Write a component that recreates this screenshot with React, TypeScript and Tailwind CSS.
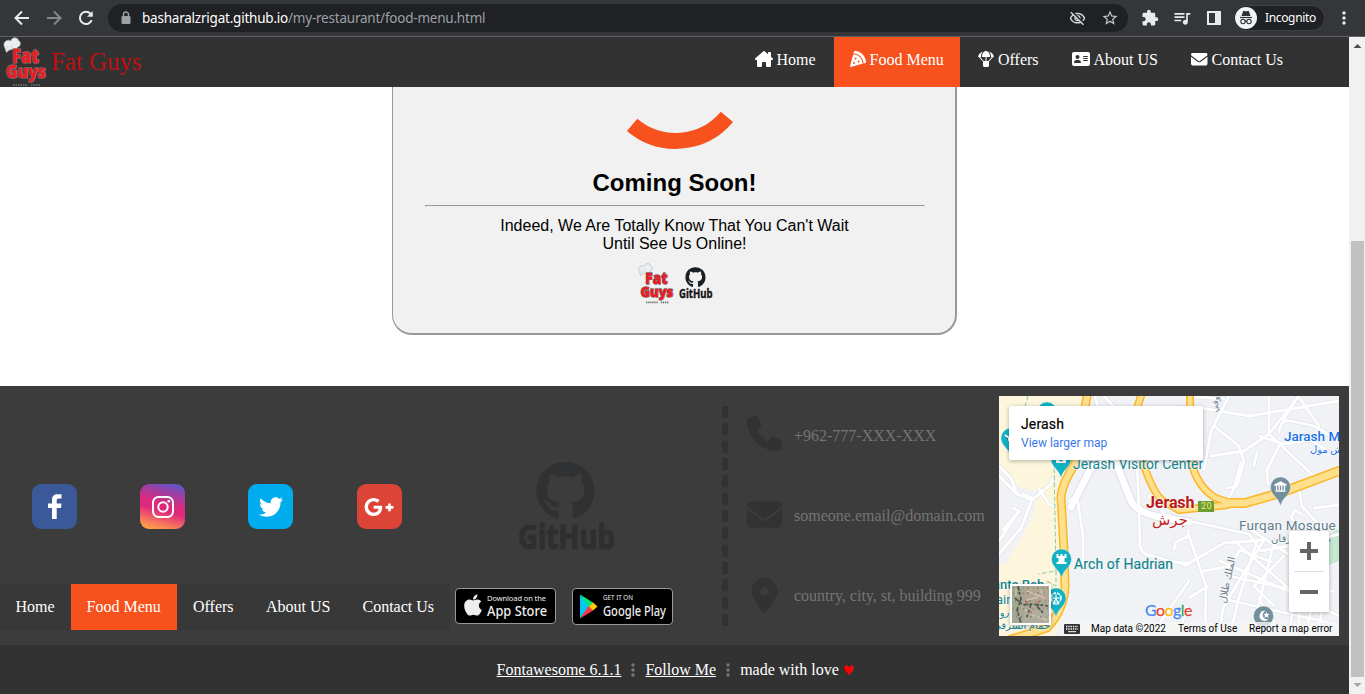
import React from "react";
import {
  FaHouseChimney, FaPizzaSlice, FaParachuteBox, FaAddressCard, FaEnvelope, FaPhone,
  FaLocationDot, FaGithub, FaTwitter, FaGooglePlusG, FaApple, FaEllipsisVertical,
} from "react-icons/fa6";
import {
  MdOutlineVisibilityOff, MdStarBorder, MdExtension, MdMoreVert, MdOutlineQueueMusic,
} from "react-icons/md";

function FatGuysLogo({ className }: { className: string }) {
  return (
    <svg viewBox="0 0 44 50" className={className}>
      <path d="M3.500 15.500 L1.500 10 C-1 5 5 1.500 8 4 C8.500 -.5 15 0 15.500 3.500 C19 5 17 10.500 14.500 10 L13.500 12.500 C9 11.500 6 12.500 3.500 15.500Z" fill="#e9eef0" stroke="#a4b0b2" strokeWidth=".7" />
      <path d="M5 12 L4.500 9 M9 10.500 L8.500 8" stroke="#b4bfc1" strokeWidth=".6" fill="none" />
      <g fontFamily="Open Sans, Lato, sans-serif" fontWeight="800" strokeLinejoin="round" paintOrder="stroke" fill="#ed1c24">
        <text x="9" y="26" fontSize="20" textLength="27" lengthAdjust="spacingAndGlyphs" stroke="#7d6a6c" strokeWidth="1.600">Fat</text>
        <text x="3" y="41" fontSize="17" textLength="40" lengthAdjust="spacingAndGlyphs" stroke="#7d6a6c" strokeWidth="1.600">Guys</text>
      </g>
      <path d="M10 48 H24 M28 48 H37" stroke="#666" strokeWidth="2" strokeDasharray="1.500 1" />
    </svg>
  );
}

function Toolbar() {
  return (
    <header className="flex h-[37px] shrink-0 items-center border-b border-[#5f6165] bg-[#35363a] text-[#e8eaed]">
      <div className="flex w-[108px] items-center gap-[12px] pl-[12px]">
        <svg viewBox="0 0 20 20" className="h-[20px] w-[20px]" fill="none" stroke="currentColor" strokeWidth="2"><path d="M17 10H4M10 3.500L3.500 10L10 16.500" /></svg>
        <svg viewBox="0 0 20 20" className="h-[20px] w-[20px] text-[#85878a]" fill="none" stroke="currentColor" strokeWidth="2"><path d="M3 10H16M10 3.500L16.500 10L10 16.500" /></svg>
        <svg viewBox="0 0 20 20" className="h-[20px] w-[20px]" fill="none" stroke="currentColor" strokeWidth="2"><path d="M15.700 12.200A6.100 6.100 0 1 1 14.500 5.800L16 7.500" /><path d="M16.700 3V8.700H11Z" fill="currentColor" stroke="none" /></svg>
      </div>
      <div className="flex h-[28px] w-[1020px] items-center rounded-full bg-[#202124] pl-[10px]">
        <svg viewBox="0 0 16 16" className="h-[16px] w-[16px] shrink-0 text-[#9aa0a6]">
          <rect x="3.500" y="6" width="9" height="8" rx="1" fill="currentColor" />
          <path d="M5.500 7V4.500a2.500 2.500 0 0 1 5 0V7" fill="none" stroke="currentColor" strokeWidth="1.400" />
        </svg>
        <div className="ml-[8px] flex-1 whitespace-nowrap pt-px font-['Noto_Sans','Open_Sans',sans-serif] text-[13.500px] tracking-[-0.220px] text-[#9aa0a6]">
          <span className="text-white">basharalzrigat.github.io</span>/my-restaurant/food-menu.html
        </div>
        <MdOutlineVisibilityOff size={17} className="mr-[15px] text-[#d4d6d9]" />
        <MdStarBorder size={18} className="mr-[9px] text-[#c4c6c9]" />
      </div>
      <MdExtension size={18} className="ml-[13px]" />
      <MdOutlineQueueMusic size={20} className="ml-[13px]" />
      <svg viewBox="0 0 14 14" className="ml-[15px] h-[14px] w-[14px]">
        <path fillRule="evenodd" fill="currentColor" d="M0 0H14V14H0Z M2 2V12H8V2Z" />
      </svg>
      <div className="ml-[12px] flex h-[26px] w-[92px] items-center gap-[8px] rounded-full border border-[#3f4043] bg-[#202124] pl-[1px]">
        <svg viewBox="0 0 22 22" className="h-[22px] w-[22px] shrink-0">
          <circle cx="11" cy="11" r="11" fill="#f1f3f4" />
          <path d="M6.500 9 L8 4.500 C8.300 3.900 9 4 11 4.500 C13 4 13.700 3.900 14 4.500 L15.500 9Z" fill="#303134" />
          <path d="M5 10.500H17" stroke="#303134" strokeWidth="1.200" />
          <g fill="none" stroke="#303134" strokeWidth="1.100"><circle cx="8" cy="14.500" r="2.200" /><circle cx="14" cy="14.500" r="2.200" /><path d="M10 14.200Q11 13.500 12 14.200" /></g>
        </svg>
        <span className="font-['Noto_Sans','Open_Sans',sans-serif] text-[12px] tracking-[-0.350px] text-white">Incognito</span>
      </div>
      <MdMoreVert size={20} className="ml-[9px]" />
    </header>
  );
}

const navItems = [
  { label: "Home", Icon: FaHouseChimney, box: "w-[95px] pl-[16px]", icon: "w-[21.500px]", size: 18 },
  { label: "Food Menu", Icon: FaPizzaSlice, box: "w-[126px] pl-[15.500px] bg-[#f7521e]", icon: "w-[20px]", size: 16 },
  { label: "Offers", Icon: FaParachuteBox, box: "w-[96px] pl-[18px]", icon: "w-[20px]", size: 16 },
  { label: "About US", Icon: FaAddressCard, box: "w-[119px] pl-[16px]", icon: "w-[21.500px]", size: 18 },
  { label: "Contact Us", Icon: FaEnvelope, box: "w-[120px] pl-[16px]", icon: "w-[20.500px]", size: 16.5 },
];

function NavBar() {
  return (
    <nav className="flex h-[50px] shrink-0 bg-[#323232] text-[16px] text-white">
      <FatGuysLogo className="ml-[3px] h-[50px] w-[44px]" />
      <div className="w-[692px] pl-[4px] pt-[8px] text-[25px] leading-[34px] tracking-[-0.060px] text-[#c00f13]">Fat Guys</div>
      {navItems.map(({ label, Icon, box, icon, size }) => (
        <a key={label} className={`flex items-center whitespace-nowrap pb-[4px] ${box}`}>
          <span className={`shrink-0 pb-[2px] ${icon}`}><Icon size={size} /></span>
          <span>{label}</span>
        </a>
      ))}
    </nav>
  );
}

function GitHubMark({ className, icon, text }: { className: string; icon: string; text: string }) {
  return (
    <svg viewBox="0 0 98 92" className={className}>
      <FaGithub x={17.5} y={0} size={60} className={icon} />
      <text x="0" y="88" fontSize="34" fontWeight="700" fontFamily="Noto Sans, Open Sans, sans-serif" textLength="97" lengthAdjust="spacingAndGlyphs" strokeWidth="1" strokeLinejoin="round" className={text}>GitHub</text>
    </svg>
  );
}

function ComingSoon() {
  return (
    <main className="flex h-[299px] shrink-0 justify-center bg-white">
      <section className="flex h-[248px] w-[565px] flex-col items-center rounded-b-[20px] border-b-2 border-l border-r-2 border-[#999] bg-[#f1f1f1] pl-px font-['Liberation_Sans',Arial,sans-serif] text-black">
        <svg viewBox="598 87 154 63" className="h-[63px] w-[154px] shrink-0">
          <circle cx="675.500" cy="74" r="67" fill="none" stroke="#f2f2f2" strokeWidth="16" />
          <path d="M632.100 124.900 A67 67 0 0 0 726.900 116.900" fill="none" stroke="#f7521e" strokeWidth="16" />
        </svg>
        <h1 className="mt-[19px] text-[24px] font-bold leading-[28px]">Coming Soon!</h1>
        <hr className="mt-[8px] w-[500px] border border-t-[#999] border-l-[#999] border-r-[#eee] border-b-[#eee]" />
        <p className="mt-[10px] text-center text-[16px] leading-[18px]">Indeed, We Are Totally Know That You Can't Wait<br />Until See Us Online!</p>
        <div className="mt-[10px] flex gap-[4px]">
          <FatGuysLogo className="h-[41px] w-[38px]" />
          <GitHubMark className="mt-[4px] h-[32px] w-[34px]" icon="text-[#191f23]" text="fill-[#111] stroke-[#111]" />
        </div>
      </section>
    </main>
  );
}

function Socials() {
  const tile = "flex h-[45px] w-[45px] items-center justify-center rounded-[9px] text-white";
  return (
    <div className="flex h-[198px] shrink-0">
      <div className="flex w-[518px] gap-[63px] pl-[32px] pt-[98px]">
        <div className={`${tile} bg-[#3b5998]`}>
          <svg viewBox="0 0 14 25" className="h-[25px] w-[14px]"><path d="M4 25V14H0V9.500H4V6C4 2 6 .2 9.500 .2H13.500V4.500H11C9 4.500 8.700 5.300 8.700 7V9.500H13.500L13 14H8.700V25Z" fill="#fff" /></svg>
        </div>
        <div className={`${tile} bg-[linear-gradient(15deg,#ffb13c_0%,#f77b5b_18%,#e1277f_43%,#dd2a7b_55%,#a03da0_76%,#515bd4_100%)]`}>
          <svg viewBox="0 0 22 22" className="h-[22px] w-[22px]" fill="none" stroke="#fff" strokeWidth="2"><rect x="1" y="1" width="20" height="20" rx="5.500" /><circle cx="11" cy="11" r="4.700" /><circle cx="16.800" cy="5.200" r="1.300" fill="#fff" stroke="none" /></svg>
        </div>
        <div className={`${tile} bg-[#00aced]`}><FaTwitter size={24} /></div>
        <div className={`${tile} ml-[1px] bg-[#dc4437] pr-[2px]`}><FaGooglePlusG size={30} /></div>
      </div>
      <GitHubMark className="mt-[75px] h-[92px] w-[98px]" icon="text-[#2f3133]" text="fill-[#2f2f2d] stroke-[#2f2f2d]" />
    </div>
  );
}

function FooterNav() {
  return (
    <div className="flex h-[46px]">
      <div className="flex w-[450px] whitespace-nowrap bg-[#383838] text-[16px] leading-[46px] text-white">
        <a className="w-[71px] pl-[15.500px]">Home</a>
        <a className="w-[106px] bg-[#f7521e] pl-[15.500px]">Food Menu</a>
        <a className="w-[73px] pl-[16px]">Offers</a>
        <a className="w-[97px] pl-[16px]">About US</a>
        <a className="pl-[15.500px]">Contact Us</a>
      </div>
      <svg viewBox="0 0 101 36" className="ml-[5px] mt-[4px] h-[36px] w-[101px] text-[#eee]" fill="currentColor" fontFamily="Noto Sans, Open Sans, sans-serif">
        <rect x=".5" y=".5" width="100" height="35" rx="3.500" fill="#000" stroke="#999" />
        <FaApple x={6} y={5} size={24} />
        <text x="32" y="12.500" fontSize="7.500" textLength="59" lengthAdjust="spacing">Download on the</text>
        <text x="32" y="28" fontSize="15" fontWeight="500" textLength="60" lengthAdjust="spacingAndGlyphs">App Store</text>
      </svg>
      <svg viewBox="0 0 101 37" className="ml-[16px] mt-[4px] h-[37px] w-[101px] text-[#eee]" fill="currentColor" fontFamily="Noto Sans, Open Sans, sans-serif">
        <rect x=".5" y=".5" width="100" height="36" rx="3.500" fill="#000" stroke="#999" />
        <g transform="translate(8 6.500)">
          <path d="M0 0V24L10 12Z" fill="#00c8f5" /><path d="M0 0L13 8L9 13Z" fill="#00e676" />
          <path d="M0 24L13 16L9 11Z" fill="#ff3548" /><path d="M13 8L17.500 12L13 16L9 12Z" fill="#ffce00" />
        </g>
        <text x="31" y="12" fontSize="7.500" textLength="30" lengthAdjust="spacingAndGlyphs">GET IT ON</text>
        <text x="31" y="27.500" fontSize="15" fontWeight="500" textLength="63" lengthAdjust="spacingAndGlyphs">Google Play</text>
      </svg>
    </div>
  );
}

function Contacts() {
  const rows = [
    { Icon: FaPhone, text: "+962-777-XXX-XXX", lift: "mb-[2px]" },
    { Icon: FaEnvelope, text: "someone.email@domain.com", lift: "mb-0" },
    { Icon: FaLocationDot, text: "country, city, st, building 999", lift: "mb-[-3px]" },
  ];
  return (
    <div className="ml-[19px] flex w-[252px] flex-col pt-[8px]">
      {rows.map(({ Icon, text, lift }) => (
        <div key={text} className="flex h-[80px] items-center whitespace-nowrap text-[16px] text-[#747474]">
          <Icon size={35} className={`shrink-0 text-[#323232] ${lift}`} />
          <span className="pb-px pl-[12px] pt-[4px]">{text}</span>
        </div>
      ))}
    </div>
  );
}

const streets = [
  "M0 80 L18 98 L33 104 L52 88 L54 82", "M18 98 L12 82 L0 70", "M33 104 L22 132 L0 158", "M0 145 L20 115 M4 134 L16 120 M20 115 L14 112",
  "M40 93 L50 108 L62 115", "M34 102 L24 98", "M70 105 L78 100 L84 140 L84 176", "M96 0 L100 15 M105 0 L120 16 M130 16 L200 10",
  "M138 66 L140 115 L141 150 Q143 160 155 160 L170 165 L190 168", "M175 154 L177 146 L188 141 L190 134", "M152 240 L176 205 L190 185",
  "M178 240 L184 225 L188 210", "M150 100 L166 119 L190 125 L250 138 L262 155 L290 150 L340 138",
  "M230 0 L212 35 L205 74 M212 60 L245 55 L270 38 L300 0", "M270 0 V38 L288 55 L320 85", "M280 36 Q282 22 292 25 L315 30 L340 45",
  "M284 25 L299 0 M299 0 L320 30 M215 30 L240 50 L245 65 L238 90 L228 92", "M242 66 L235 92 L229 105 M258 56 L255 70",
  "M260 40 L285 48 L312 44 L328 55 M280 50 L268 74 L269 88", "M300 94 L303 110 L326 136 M302 118 L296 114 L292 122 L300 130 M315 112 L340 109",
  "M190 140 L207 190 L206 240 M205 175 L232 170 L240 155 M209 190 L190 202", "M185 170 L225 147 L265 144 L240 185 L224 212 L220 240",
  "M246 130 L300 165 L290 240 M235 145 L310 210 M221 165 L300 200 L335 195", "M258 145 L239 205 L231 240 M274 150 L252 240",
  "M230 180 L285 192 L340 220 M225 203 L340 229 M260 203 L285 240 M285 160 L255 190 L275 210 M310 135 L295 196",
  "M300 150 V240 M315 205 L305 240 M330 180 L318 240 M240 154 L273 166 M190 10 L250 20 L340 5 M185 0 L225 3",
];

function Pin({ x, y, fill, children }: { x: number; y: number; fill: string; children?: React.ReactNode }) {
  return (
    <g transform={`translate(${x} ${y})`}>
      <path d="M0 19 C-2 10 -10 8 -10 0 A10 10 0 0 1 10 0 C10 8 2 10 0 19Z" fill={fill} stroke="#fff" strokeOpacity=".5" strokeWidth=".6" />
      {children}
    </g>
  );
}

function MapView() {
  const label = "absolute whitespace-nowrap [text-shadow:0_0_2px_#fff,0_0_2px_#fff]";
  const castle = <path d="M-5-5H-3V-3H-1V-5H1V-3H3V-5H5V-1H3V3H5V5H-5V3H-3V-1H-5Z" fill="#fff" />;
  return (
    <div className="relative mt-[10px] h-[240px] w-[340px] shrink-0 overflow-hidden bg-[#f0f2f5] font-[Roboto,'DejaVu_Sans',sans-serif]">
      <svg viewBox="0 0 340 240" className="block h-[240px] w-[340px]">
        <path d="M0 0H86L76 66L61 98L63 160L68 210L55 240H0V170L8 165L32 125L40 96L18 90L0 68Z" fill="#fdf6dd" />
        <path d="M333 136L340 133V165L330 169L325 150Z" fill="#c5e8ce" />
        <g fill="none" strokeLinejoin="round" strokeLinecap="round">
          <g stroke="#dfe2e7" strokeWidth="4">{streets.map((d) => <path key={d} d={d} />)}</g>
          <path d="M72 111L92 72L115 62L132 105Q138 117 165 122L190 126" stroke="#dde1e6" strokeWidth="9" />
          <g stroke="#fff" strokeWidth="2.800">{streets.map((d) => <path key={d} d={d} />)}</g>
          <path d="M72 111L92 72L115 62L132 105Q138 117 165 122L190 126" stroke="#fff" strokeWidth="7" />
          <path d="M29 0L23 20 M55 66L57 175L40 178 M57 175V190L48 185" stroke="#8ecb99" strokeDasharray="4 3" />
          {["#fbb62a", "#fee08c"].map((color, i) => (
            <g key={color} stroke={color}>
              <path d="M88 0L76 68Q63 88 62 101L65 155L66 190Q65 214 48 232L0 247" strokeWidth={i ? 6 : 9} />
              <path d="M142 0L137 15L145 70Q155 98 163 104L180 114L229 109 M191 0L192 65Q198 90 215 101Q232 109 246 107L281 97L340 75" strokeWidth={i ? 5 : 8} />
              <path d="M229 107L246 107L281 97L340 75" strokeWidth={i ? 7 : 10} />
            </g>
          ))}
        </g>
        <Pin x={48} y={16} fill="#12b2c4" />
        <Pin x={12} y={42} fill="#12b2c4"><path d="M-6-3L-2 0V3" stroke="#fff" strokeWidth="2" /></Pin>
        <Pin x={62} y={63} fill="#12b2c4"><rect x="-5" y="-3" width="10" height="7" fill="#fff" /><circle r="2" cy=".5" fill="#12b2c4" /></Pin>
        <Pin x={62.500} y={163} fill="#12b2c4">{castle}</Pin>
        <Pin x={57} y={202} fill="#12b2c4"><circle r="5" fill="none" stroke="#fff" strokeWidth="1.500" strokeDasharray="3 1" /><path d="M0 0L-3 6H3ZM-4 0H4M0-4V4" stroke="#fff" fill="none" /></Pin>
        <Pin x={281.500} y={91} fill="#738f9c"><path d="M-6-2L0-5L6-2ZM-5 4H5M-4-1V3M-1.300-1V3M1.300-1V3M4-1V3" fill="#fff" stroke="#fff" strokeWidth="1.300" /></Pin>
        <Pin x={264.500} y={220} fill="#738f9c"><path d="M2-5A5 5 0 1 0 5 3A4 4 0 1 1 2-5Z" fill="#fff" /><path d="M3-4L4-2L6-2L4.500-.5L5 2L3 .5L1 2L1.500-.5L0-2L2-2Z" fill="#fff" /></Pin>
        <rect x="199" y="105" width="16" height="11" fill="#6b9c36" />
      </svg>
      <span className="absolute left-[202px] top-[105px] text-[9px] leading-[11px] tracking-[0.400px] text-[#f4e86a]">20</span>
      <span className={`${label} left-[74px] top-[60px] text-[14px] leading-[16px] text-[#13858f]`}>Jerash Visitor Center</span>
      <span className={`${label} left-[147px] top-[98px] text-[16px] font-bold leading-[18px] tracking-[-0.100px] text-[#b8171d]`}>Jerash</span>
      <span dir="rtl" className={`${label} left-[153px] top-[115px] text-[15px] leading-[18px] text-[#c5221f]`}>جرش</span>
      <span className={`${label} left-[285px] top-[32px] text-[13.500px] font-medium leading-[16px] text-[#1a73e8]`}>Jarash Mall</span>
      <span dir="rtl" className={`${label} left-[311px] top-[47px] text-[10px] leading-[14px] text-[#1a73e8]`}>جرش مول</span>
      <span className={`${label} left-[240px] top-[121px] text-[13.500px] leading-[16px] tracking-[0.250px] text-[#607d8b]`}>Furqan Mosque</span>
      <span dir="rtl" className={`${label} left-[272px] top-[136px] text-[10px] leading-[13px] text-[#607d8b]`}>مسجد الفرقان</span>
      <span className={`${label} left-[75px] top-[160px] text-[14px] leading-[16px] tracking-[0.100px] text-[#13858f] [-webkit-text-stroke:0.2px_currentColor]`}>Arch of Hadrian</span>
      <span dir="rtl" className={`${label} left-[205px] top-[178px] rotate-[-78deg] text-[10px] leading-[12px] text-[#6e7f8a]`}>الملك طلال</span>
      <span dir="rtl" className={`${label} left-[208px] top-[2px] rotate-[-82deg] text-[9px] leading-[12px] text-[#6e7f8a]`}>وفي</span>
      <span className={`${label} left-[-6px] top-[181px] text-[13px] font-medium leading-[15px] text-[#13858f]`}>ante Reb</span>
      <span className={`${label} left-[-3px] top-[196px] text-[13px] leading-[15px] text-[#13858f]`}>ain</span>
      <span dir="rtl" className={`${label} left-[-10px] top-[211px] text-[10px] leading-[12px] text-[#13858f]`}>رومه</span>
      <span dir="rtl" className={`${label} left-[-6px] top-[224px] text-[10px] leading-[12px] text-[#13858f]`}>حمام الشرقي</span>

      <div className="absolute left-[10px] top-[10px] h-[54px] w-[194px] rounded-[2px] bg-white pl-[12px] pt-[9px] shadow-[0_1px_4px_rgba(0,0,0,.3)]">
        <div className="text-[14px] leading-[18px] tracking-[0.150px] text-black [-webkit-text-stroke:0.2px_black]">Jerash</div>
        <a className="block pt-px text-[12px] leading-[18px] text-[#3b78e7]">View larger map</a>
      </div>
      <div className="absolute left-[290px] top-[135px] flex h-[81px] w-[40px] flex-col items-center rounded-[2px] bg-white shadow-[0_1px_4px_rgba(0,0,0,.3)]">
        <svg viewBox="0 0 40 81" className="h-[81px] w-[40px]"><path d="M11 20H29M20 11V29M11 61H29" stroke="#666" strokeWidth="4" /><path d="M5 40.500H35" stroke="#e0e0e0" /></svg>
      </div>
      <div className="absolute left-[11px] top-[188px] h-[41px] w-[41px] border-2 border-white bg-[#aca795] shadow-[0_1px_4px_rgba(0,0,0,.3)]">
        <svg viewBox="0 0 37 37" className="h-[37px] w-[37px]">
          <path d="M0 0H10L7 37H0Z" fill="#a3a690" /><path d="M16 0H37V14L24 18L12 12Z" fill="#b3a793" /><path d="M14 24L37 22V37H10Z" fill="#b0ad9e" />
          <path d="M6 0L9 13L5 24L9 37M3 12L11 19L20 18L36 20M19 18L15 31M25 20L32 28" fill="none" stroke="#4d5750" strokeWidth="1.700" strokeDasharray="5 1 3 2" />
          <path d="M4 3V10M15 5L33 12M13 25L18 22M20 29L35 34M15 14L26 11M28 4L31 8" stroke="#cfc2ae" strokeWidth="1.500" />
          <path d="M1 2H36M1 7H35M3 15H34M1 23H36M4 31H36" stroke="#5f655a" strokeOpacity=".5" strokeWidth="1.500" strokeDasharray="1 3 2 4" />
          <path d="M25 16H28M13 16H16M17 26H20" stroke="#b56d60" strokeWidth="1.500" />
        </svg>
      </div>
      <div className="absolute left-[146px] top-[205px] font-[Lato,sans-serif] text-[16px] leading-[18px] tracking-[-0.550px] text-[#4285f4] [-webkit-text-stroke:0.3px_currentColor] [text-shadow:0_0_2px_#fff,0_0_2px_#fff]">
        G<span className="text-[#ea4335]">o</span><span className="text-[#fbbc05]">o</span>g<span className="text-[#34a853]">l</span><span className="text-[#ea4335]">e</span>
      </div>
      <div className="absolute bottom-0 right-0 flex h-[14px] w-[278px] items-center whitespace-nowrap bg-[#f5f5f5]/80 pl-[3px] text-[10px] leading-[14px] text-black">
        <svg viewBox="0 0 16 10" className="h-[10px] w-[16px] shrink-0"><rect width="16" height="10" rx="1" fill="#333" /><path d="M2 2.500H14M2 5H14" stroke="#fff" strokeWidth="1.300" strokeDasharray="1.300 1" /><path d="M4 7.700H12" stroke="#fff" /></svg>
        <span className="ml-[11px] w-[87px]">Map data ©2022</span>
        <span className="w-[71px]">Terms of Use</span>
        <span>Report a map error</span>
      </div>
    </div>
  );
}

function Footer() {
  return (
    <footer className="text-white">
      <div className="flex h-[259px] bg-[#3c3c3c]">
        <div className="flex w-[722px] flex-col"><Socials /><FooterNav /></div>
        <div className="mt-[20px] h-[220px] border-l-[6px] border-dashed border-[#323232]" />
        <Contacts />
        <MapView />
      </div>
      <div className="flex h-[49px] items-center justify-center whitespace-nowrap bg-[#323232] pl-[2px] text-[16px]">
        <a className="underline">Fontawesome 6.1.1</a>
        <FaEllipsisVertical size={16} className="mx-[4px] text-[#777]" />
        <a className="underline">Follow Me</a>
        <FaEllipsisVertical size={16} className="mx-[4px] text-[#777]" />
        <span>made with love <span className="font-['DejaVu_Sans',sans-serif] text-[13px] leading-none text-[#f00]">♥</span></span>
      </div>
    </footer>
  );
}

function Scrollbar() {
  return (
    <div className="flex w-[16px] flex-col items-center bg-[#f1f1f1]">
      <svg viewBox="0 0 16 17" className="h-[17px] w-[16px]"><path d="M4.500 11L8.500 7L12.500 11Z" fill="#505050" /></svg>
      <div className="mt-[187px] h-[436px] w-[13px] bg-[#c1c1c1]" />
      <svg viewBox="0 0 16 17" className="h-[17px] w-[16px]"><path d="M4.500 6L8.500 10L12.500 6Z" fill="#a3a3a3" /></svg>
    </div>
  );
}

export default function App() {
  return (
    <div className="flex h-[694px] w-[1365px] flex-col overflow-hidden bg-white font-['Liberation_Serif','Times_New_Roman',serif]">
      <Toolbar />
      <div className="flex h-[657px]">
        <div className="w-[1349px] shrink-0"><NavBar /><ComingSoon /><Footer /></div>
        <Scrollbar />
      </div>
    </div>
  );
}
